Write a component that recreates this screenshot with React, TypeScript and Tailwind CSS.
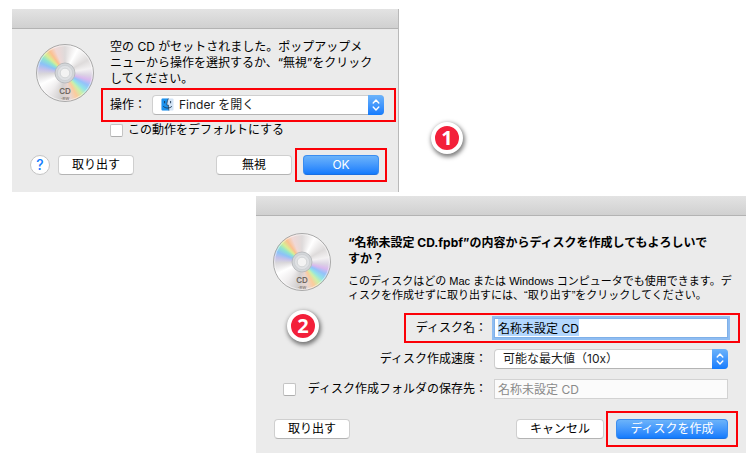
import React, { useEffect, useRef } from 'react'

interface ButtonProps {
  children: React.ReactNode
  primary?: boolean
  className: string
}

const PushButton: React.FC<ButtonProps> = ({ children, primary, className }) => (
  <button
    type="button"
    className={`h-5 shrink-0 rounded border text-xs leading-none whitespace-nowrap ${
      primary
        ? 'border-[#3a8df0] border-b-[#1b6fe0] bg-linear-to-b from-[#6bb3fa] to-[#117bfd] text-white'
        : 'border-[#cfcfcf] border-b-[#b4b4b4] bg-white text-black'
    } ${className}`}
  >
    {children}
  </button>
)

interface PopupProps {
  id: string
  value: string
  icon?: React.ReactNode
  className: string
}

const PopupSelect: React.FC<PopupProps> = ({ id, value, icon, className }) => (
  <div className={`relative h-5 ${className}`}>
    <select
      id={id}
      className={`block h-5 w-full appearance-none rounded border border-[#cfcfcf] border-b-[#b4b4b4] bg-white pr-5 text-xs text-[#1c1c1c] ${
        icon ? 'pl-[26px]' : 'pl-2'
      }`}
    >
      <option>{value}</option>
    </select>
    {icon && <span className="pointer-events-none absolute top-[3px] left-[9px]">{icon}</span>}
    <span className="pointer-events-none absolute inset-y-0 right-0 w-4 rounded-r bg-linear-to-b from-[#6bb3fa] to-[#117bfd]">
      <svg viewBox="0 0 16 20" className="h-5 w-4" fill="none" stroke="white" strokeWidth="1.4" strokeLinecap="round" strokeLinejoin="round">
        <path d="M5.2 8 L8 5 L10.8 8" />
        <path d="M5.2 12 L8 15 L10.8 12" />
      </svg>
    </span>
  </div>
)

const Disc = () => (
  <div className="size-[58px] shrink-0 rounded-full border border-[#a9a9a9] bg-[conic-gradient(#dedada_0deg,#ffffff_28deg,#dedbdb_60deg,#f3f1f2_80deg,#dcd4e4_95deg,#d9b8ee_106deg,#94c2fa_118deg,#92e4e6_130deg,#cdf0a8_141deg,#fccb9c_153deg,#e8d6d2_168deg,#d2cfcf_190deg,#efedee_218deg,#ffffff_245deg,#d9d7da_268deg,#c3c0ea_280deg,#8cc2f8_292deg,#8fe4cf_304deg,#d9ee94_314deg,#fcc08f_325deg,#f0d8d6_338deg,#dedada_360deg)]">
    <svg viewBox="1 1 56 56" className="size-full">
      <circle cx="29" cy="29" r="27.4" fill="none" stroke="#ffffff" strokeOpacity="0.5" />
      <circle cx="29" cy="29" r="10" fill="#d3d6d9" stroke="#b1b4b8" strokeWidth="0.8" />
      <circle cx="29" cy="29" r="7.6" fill="#dfe1e4" stroke="#c6c9cc" strokeWidth="0.6" />
      <circle cx="29" cy="29" r="4.8" fill="#f3f3f3" stroke="#c9cbcd" strokeWidth="0.7" />
      <text x="29" y="50" textAnchor="middle" fontSize="8" fontWeight="600" fill="#6f6660">CD</text>
      <text x="29" y="56" textAnchor="middle" fontSize="4" fontWeight="600" fill="#8a817b">-RW</text>
    </svg>
  </div>
)

const FinderIcon = () => (
  <svg viewBox="0 0 13 13" className="size-[13px]">
    <rect x="0.5" y="0.5" width="12" height="12" rx="1" fill="#d3e4f6" />
    <path d="M1.5 0.5 H7.4 C6.2 3 5.9 5 5.9 7.2 H7.5 C7.4 9.5 7.6 11 8 12.5 H1.5 A1 1 0 0 1 0.5 11.5 V1.5 A1 1 0 0 1 1.5 0.5 Z" fill="#1c92ee" />
    <path d="M7.4 0.5 C6.2 3 5.9 5 5.9 7.2 H7.5 C7.4 9.5 7.6 11 8 12.5" fill="none" stroke="#17334f" strokeWidth="0.7" />
    <path d="M3.6 3.4 V4.9 M9.6 3.4 V4.9 M2.6 8.6 C4.8 10.6 8.6 10.6 10.6 8.6" fill="none" stroke="#17334f" strokeWidth="0.9" strokeLinecap="round" />
  </svg>
)

const StepBadge: React.FC<{ step: number; className: string }> = ({ step, className }) => (
  <span
    className={`absolute flex size-8 items-center justify-center rounded-full border-4 border-white bg-[#f3203a] font-['Open_Sans','Noto_Sans',sans-serif] text-xl leading-none font-bold text-white shadow-[1px_2px_4px_1px_rgba(0,0,0,0.5)] ${className}`}
  >
    {step}
  </span>
)

const TitleBar = () => (
  <div className="h-5 border-b border-[#b3b3b3] bg-linear-to-b from-[#e3e3e3] to-[#d0d0d0]" />
)

const checkboxClass =
  'size-[13px] shrink-0 appearance-none rounded-xs border border-[#c4c4c4] border-b-[#aeaeae] bg-white checked:bg-[#117bfd]'

const InsertDialog = () => (
  <section className="w-full max-w-[387px] border-r border-[#b9b9b9] bg-[#ebebeb]">
    <TitleBar />
    <div className="flex gap-4 pt-[10px] pl-6">
      <div className="pt-[5px]">
        <Disc />
      </div>
      <div className="flex-1">
        <p className="text-xs leading-4 whitespace-nowrap">
          空の CD がセットされました。ポップアップメ
          <br />
          ニューから操作を選択するか、“無視”をクリック
          <br />
          してください。
        </p>
        <div className="mt-px mr-[2px] -ml-[9px] flex h-[34px] items-center gap-[6px] border-2 border-[#fb0007] pr-[10px] pl-[7px]">
          <label htmlFor="action" className="shrink-0 text-xs">操作：</label>
          <PopupSelect id="action" value="Finder を開く" icon={<FinderIcon />} className="flex-1" />
        </div>
        <label className="mt-px flex h-[14px] items-center gap-[5px] text-xs leading-none">
          <input type="checkbox" className={checkboxClass} />
          この動作をデフォルトにする
        </label>
      </div>
    </div>
    <div className="mt-[11px] flex h-[34px] items-center pr-[11px] pl-[18px]">
      <button
        type="button"
        className="size-5 shrink-0 rounded-full border border-[#c4c4c4] bg-white text-sm leading-none font-medium text-[#117bfd]"
      >
        ?
      </button>
      <PushButton className="ml-2 w-[76px]">取り出す</PushButton>
      <PushButton className="mr-[3px] ml-auto w-[76px]">無視</PushButton>
      <div className="flex h-full items-center border-2 border-[#fb0007] px-[6px]">
        <PushButton primary className="w-[76px]">OK</PushButton>
      </div>
    </div>
    <div className="h-[10px]" />
  </section>
)

const BurnDialog = () => {
  const nameRef = useRef<HTMLInputElement>(null)

  // the disc name starts out selected, ready to be typed over
  useEffect(() => {
    nameRef.current?.focus()
    nameRef.current?.select()
  }, [])

  return (
    <section className="relative mt-1 ml-auto w-full max-w-[490px] bg-[#ebebeb] pb-[6px]">
      <TitleBar />
      <div className="flex gap-[17px] pt-[17px] pl-[17px]">
        <Disc />
        <div className="pt-[2px] whitespace-nowrap">
          <h1 className="text-xs leading-4 font-bold">
            “名称未設定 CD.fpbf”の内容からディスクを作成してもよろしいで
            <br />
            すか？
          </h1>
          <p className="mt-[7px] font-['Liberation_Sans','Noto_Sans_CJK_JP',sans-serif] text-[11px] leading-[14px]">
            このディスクはどの Mac または Windows コンピュータでも使用できます。デ
            <br />
            ィスクを作成せずに取り出すには、“取り出す”をクリックしてください。
          </p>
        </div>
      </div>
      <StepBadge step={2} className="top-[114px] left-[31px]" />

      <div className="mt-[11px] mr-[6px] ml-auto flex h-[30px] w-[336px] items-center justify-end gap-[7px] border-2 border-[#fb0007] pr-[10px]">
        <label htmlFor="disc-name" className="text-xs">ディスク名：</label>
        <input
          id="disc-name"
          ref={nameRef}
          defaultValue="名称未設定 CD"
          className="h-5 w-[234px] border border-[#7fb0e8] bg-white px-[3px] pb-[2px] text-xs outline-2 outline-[#8fbdf2] selection:bg-[#b3d7fe] selection:text-black"
        />
      </div>
      <div className="mt-[6px] flex items-center justify-end gap-[7px] pr-[18px]">
        <label htmlFor="speed" className="text-xs">ディスク作成速度：</label>
        <PopupSelect id="speed" value="可能な最大値（10x）" className="w-[234px]" />
      </div>
      <div className="mt-[10px] flex items-center justify-end gap-[7px] pr-[18px] pl-[27px]">
        <label className="flex flex-1 items-center text-xs">
          <input type="checkbox" className={checkboxClass} />
          <span className="flex-1 text-right whitespace-nowrap">ディスク作成フォルダの保存先：</span>
        </label>
        <input
          aria-label="保存先"
          defaultValue="名称未設定 CD"
          disabled
          className="h-5 w-[234px] border border-[#d2d2d2] bg-[#fbfbfb] px-[3px] pb-[2px] text-xs text-[#8a8a8a]"
        />
      </div>

      <div className="mt-3 flex h-9 items-center pr-2 pl-[18px]">
        <PushButton className="w-[76px]">取り出す</PushButton>
        <PushButton className="mr-[2px] ml-auto w-[88px]">キャンセル</PushButton>
        <div className="flex h-full items-center border-2 border-[#fb0007] px-2">
          <PushButton primary className="w-28">ディスクを作成</PushButton>
        </div>
      </div>
    </section>
  )
}

export default function App() {
  return (
    <main className="min-h-screen bg-white pt-[9px] pr-1 pl-3 font-['Inter','Noto_Sans_CJK_JP',sans-serif] text-black" lang="ja">
      <div className="relative">
        <InsertDialog />
        <StepBadge step={1} className="top-[113px] left-[419px]" />
      </div>
      <BurnDialog />
    </main>
  )
}
